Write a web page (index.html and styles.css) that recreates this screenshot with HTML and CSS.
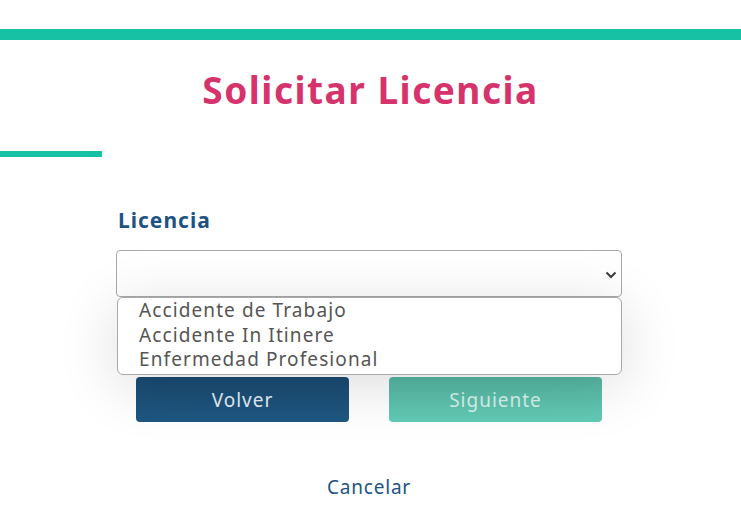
FILE: index.html
```html
<!DOCTYPE html>
<html lang="es">
<head>
  <meta charset="UTF-8">
  <meta name="viewport" content="width=device-width, initial-scale=1.0">
  <title>Solicitar Licencia</title>
  <link rel="stylesheet" href="styles.css">
</head>
<body>
  <div class="top-bar"></div>
  <h1 class="title">Solicitar Licencia</h1>
  <div class="accent"></div>

  <form class="form">
    <label class="label">Licencia</label>
    <div class="select-wrap">
      <div class="select">
        <svg class="chevron" width="12" height="8" viewBox="0 0 12 8">
          <path d="M1.5 1.5 L6 6 L10.5 1.5" fill="none" stroke="#3d3d3d" stroke-width="2"/>
        </svg>
      </div>
      <ul class="options">
        <li>Accidente de Trabajo</li>
        <li>Accidente In Itinere</li>
        <li>Enfermedad Profesional</li>
      </ul>
    </div>
    <div class="actions">
      <button type="button" class="btn btn-back">Volver</button>
      <button type="button" class="btn btn-next">Siguiente</button>
    </div>
    <p class="cancel"><a href="#">Cancelar</a></p>
  </form>
</body>
</html>
```

FILE: styles.css
```css
body {
  font-family: "Noto Sans", Arial, sans-serif;
  background-color: #fff;
  margin: 0;
  padding-top: 29px;
}

.top-bar {
  height: 11px;
  background-color: #17c1a3;
}

.title {
  margin: 28px 0 0;
  font-size: 37px;
  line-height: 44px;
  font-weight: 700;
  letter-spacing: 1.5px;
  color: #d6336c;
  text-align: center;
}

.accent {
  width: 102px;
  height: 6px;
  margin-top: 39px;
  background-color: #17c1a3;
}

.form {
  width: 506px;
  margin: 49px 0 0 116px;
}

.label {
  display: block;
  font-size: 21px;
  font-weight: 700;
  letter-spacing: 1px;
  color: #1d5383;
  line-height: 28px;
  margin-left: 2px;
}

.select-wrap {
  position: relative;
  margin-top: 16px;
}

.select {
  height: 45px;
  border: 1px solid #a9a9a9;
  border-radius: 4px;
  display: flex;
  align-items: center;
  justify-content: flex-end;
  padding-right: 4px;
}

.chevron {
  margin-top: 2px;
}

.options {
  position: absolute;
  top: 47px;
  left: 1px;
  right: 0;
  margin: 0;
  padding: 0 0 2px 21px;
  list-style: none;
  background: #fff;
  border: 1px solid #a9a9a9;
  border-radius: 6px;
  box-shadow: 0 10px 60px rgba(0, 0, 0, 0.14);
  font-size: 19px;
  line-height: 24.5px;
  letter-spacing: 1.1px;
  color: #555;
}

.actions {
  display: grid;
  grid-template-columns: 1fr 1fr;
  gap: 40px;
  padding: 0 20px;
  margin-top: 80px;
}

.btn {
  height: 45px;
  border: none;
  border-radius: 4px;
  font-family: inherit;
  font-size: 19px;
  letter-spacing: 1px;
  cursor: pointer;
}

.btn-back {
  background: linear-gradient(#1a4a71, #1f5882);
  color: #e3edf5;
}

.btn-next {
  background: linear-gradient(#55b6a2, #63cbb5);
  color: #d8f1eb;
}

.cancel {
  text-align: center;
  margin: 52px 0 0;
  font-size: 19px;
  letter-spacing: 0.8px;
}

.cancel a {
  color: #1d5383;
  text-decoration: none;
}
```
